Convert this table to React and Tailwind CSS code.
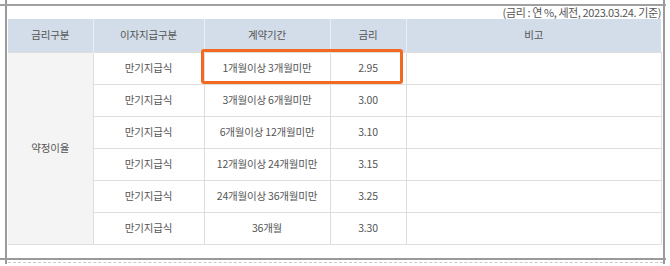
import React from 'react';

const rows = [
  { pay: '만기지급식', term: '1개월이상 3개월미만', rate: '2.95' },
  { pay: '만기지급식', term: '3개월이상 6개월미만', rate: '3.00' },
  { pay: '만기지급식', term: '6개월이상 12개월미만', rate: '3.10' },
  { pay: '만기지급식', term: '12개월이상 24개월미만', rate: '3.15' },
  { pay: '만기지급식', term: '24개월이상 36개월미만', rate: '3.25' },
  { pay: '만기지급식', term: '36개월', rate: '3.30' },
];

const font = { fontFamily: '"Noto Sans CJK KR", "Noto Sans", sans-serif' };

// vertical frame bits above/below the box
function Ticks({ children }) {
  return (
    <div className="relative flex h-[4px] shrink-0">
      <div className="ml-[5px] w-[2px] bg-[#9a9a9a]" />
      <div className="w-[656px]">{children}</div>
      <div className="w-[2px] bg-[#9a9a9a]" />
    </div>
  );
}

export default function App() {
  return (
    <div className="w-[670px] h-[266px] bg-white overflow-hidden text-[#555] flex flex-col" style={font}>
      <Ticks />
      <div className="h-[2px] w-[666px] bg-[#a0a0a0] shrink-0" />

      <div className="flex h-[252px] shrink-0">
        <div className="ml-[5px] w-[2px] bg-[#9a9a9a]" />
        <div className="w-[656px] pl-[1px]">
          <div className="w-[653px] h-[13px] flex items-center justify-end text-[11px] leading-none tracking-[-0.4px]">
            (금리 : 연 %, 세전, 2023.03.24. 기준)
          </div>
          <div className="relative w-[653px]">
            <table className="w-[653px] border-collapse table-fixed text-[10.5px] tracking-[-0.2px] text-center">
              <colgroup>
                <col className="w-[85px]" />
                <col className="w-[111px]" />
                <col className="w-[126px]" />
                <col className="w-[76px]" />
                <col className="w-[255px]" />
              </colgroup>
              <thead>
                <tr className="h-[33px] bg-[#d2dde9]">
                  {['금리구분', '이자지급구분', '계약기간', '금리', '비고'].map((h) => (
                    <th key={h} className="font-normal border-x border-[#e9eef4] first:border-l-0 last:border-r-0 p-0">
                      {h}
                    </th>
                  ))}
                </tr>
              </thead>
              <tbody>
                {rows.map((r, i) => (
                  <tr key={i} className="h-[32px]">
                    {i === 0 && (
                      <td rowSpan={6} className="bg-[#f4f4f4] border border-[#dedede] border-l-0 p-0">
                        약정이율
                      </td>
                    )}
                    <td className="border border-[#dedede] p-0">{r.pay}</td>
                    <td className="border border-[#dedede] p-0">{r.term}</td>
                    <td className="border border-[#dedede] p-0">{r.rate}</td>
                    <td className="border border-[#dedede] p-0"></td>
                  </tr>
                ))}
              </tbody>
            </table>
            {/* highlight box over the first row */}
            <div className="absolute left-[193px] top-[30px] w-[202px] h-[35px] border-[3px] border-[#f26a21] rounded-[3px]" />
          </div>
        </div>
        <div className="w-[2px] bg-[#9a9a9a]" />
      </div>

      <div className="h-[2px] w-[666px] bg-[#9a9a9a] shrink-0" />
      <Ticks>
        <div className="mt-[2px] ml-[1px] border-t border-dashed border-[#c8c8c8]" />
      </Ticks>
    </div>
  );
}
